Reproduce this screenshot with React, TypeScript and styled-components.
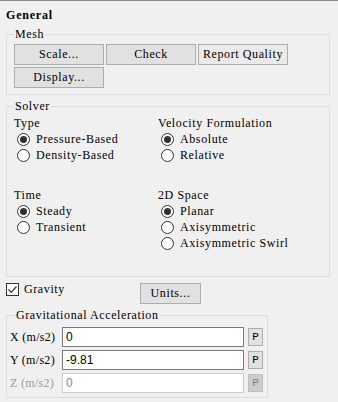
import styled, { createGlobalStyle } from 'styled-components';

const GlobalStyle = createGlobalStyle`
  html, body {
    margin: 0;
    padding: 0;
    background: #f0f0f0;
  }
  body {
    font-family: "Liberation Serif", "Noto Sans CJK SC", serif;
    font-size: 12px;
    letter-spacing: 0.6px;
    color: #000;
  }
`;

const typeOptions = [
  { label: 'Pressure-Based', checked: true },
  { label: 'Density-Based', checked: false },
];
const velocityOptions = [
  { label: 'Absolute', checked: true },
  { label: 'Relative', checked: false },
];
const timeOptions = [
  { label: 'Steady', checked: true },
  { label: 'Transient', checked: false },
];
const spaceOptions = [
  { label: 'Planar', checked: true },
  { label: 'Axisymmetric', checked: false },
  { label: 'Axisymmetric Swirl', checked: false },
];
const accelRows = [
  { label: 'X (m/s2)', value: '0', disabled: false },
  { label: 'Y (m/s2)', value: '-9.81', disabled: false },
  { label: 'Z (m/s2)', value: '0', disabled: true },
];

type Option = { label: string; checked: boolean };

function RadioGroup({ title, options }: { title: string; options: Option[] }) {
  return (
    <Section>
      <SectionLabel>{title}</SectionLabel>
      {options.map((o) => (
        <RadioRow key={o.label}>
          <RadioCircle $checked={o.checked} />
          <span>{o.label}</span>
        </RadioRow>
      ))}
    </Section>
  );
}

function App() {
  return (
    <>
      <GlobalStyle />
      <Panel>
        <Title>General</Title>

        <Group>
          <Legend>Mesh</Legend>
          <ButtonGrid>
            <Button>Scale...</Button>
            <Button>Check</Button>
            <Button $light>Report Quality</Button>
            <Button>Display...</Button>
          </ButtonGrid>
        </Group>

        <SolverGroup>
          <Legend>Solver</Legend>
          <SolverGrid>
            <RadioGroup title="Type" options={typeOptions} />
            <RadioGroup title="Velocity Formulation" options={velocityOptions} />
            <RadioGroup title="Time" options={timeOptions} />
            <RadioGroup title="2D Space" options={spaceOptions} />
          </SolverGrid>
        </SolverGroup>

        <GravityRow>
          <CheckLabel>
            <CheckBox>
              <svg width="11" height="11" viewBox="0 0 11 11">
                <polyline points="1.5,5.5 4.2,8.3 9.5,2.5" fill="none" stroke="#333" strokeWidth="1.2" />
              </svg>
            </CheckBox>
            <span>Gravity</span>
          </CheckLabel>
          <UnitsButton>Units...</UnitsButton>
        </GravityRow>

        <AccelGroup>
          <AccelLegend>Gravitational Acceleration</AccelLegend>
          <AccelList>
            {accelRows.map((r) => (
              <AccelRow key={r.label}>
                <AccelLabel $disabled={r.disabled}>{r.label}</AccelLabel>
                <ValueBox $disabled={r.disabled}>{r.value}</ValueBox>
                <PButton $disabled={r.disabled}>P</PButton>
              </AccelRow>
            ))}
          </AccelList>
        </AccelGroup>
      </Panel>
    </>
  );
}

export default App;

const Panel = styled.div`
  width: 338px;
  height: 402px;
  box-sizing: border-box;
  border-top: 1px solid #8c8c8c;
  padding: 0 8px 0 6px;
  overflow: hidden;
`;

const Title = styled.div`
  margin-top: 7px;
  height: 14px;
  line-height: 14px;
  font-weight: bold;
  letter-spacing: 0.8px;
`;

const Group = styled.fieldset`
  margin: 6px 0 0 0;
  padding: 4px 7px 6px 7px;
  border: 1px solid #dcdcdc;
  min-width: 0;
`;

const Legend = styled.legend`
  padding: 0 1px;
  height: 12px;
  line-height: 12px;
`;

const ButtonGrid = styled.div`
  display: grid;
  grid-template-columns: repeat(3, 90px);
  grid-auto-rows: 21px;
  gap: 2px;
`;

const Button = styled.div<{ $light?: boolean }>`
  box-sizing: border-box;
  height: 21px;
  border: 1px solid #adadad;
  background: ${(p) => (p.$light ? '#eaeaea' : '#e1e1e1')};
  display: flex;
  align-items: center;
  justify-content: center;
  white-space: nowrap;
`;

const SolverGroup = styled(Group)`
  margin-top: 5px;
  padding: 3px 7px 25px 7px;
`;

const SolverGrid = styled.div`
  display: grid;
  grid-template-columns: 144px 1fr;
  row-gap: 24px;
  align-items: start;
`;

const Section = styled.div`
  display: flex;
  flex-direction: column;
`;

const SectionLabel = styled.div`
  height: 16px;
  line-height: 16px;
`;

const RadioRow = styled.div`
  display: flex;
  align-items: center;
  gap: 6px;
  height: 16px;
  padding-left: 3px;
  white-space: nowrap;
`;

const RadioCircle = styled.span<{ $checked: boolean }>`
  box-sizing: border-box;
  width: 13px;
  height: 13px;
  border-radius: 50%;
  border: 1px solid #333;
  background: #fff;
  display: flex;
  align-items: center;
  justify-content: center;
  &::after {
    content: '';
    width: 7px;
    height: 7px;
    border-radius: 50%;
    background: ${(p) => (p.$checked ? '#333' : 'transparent')};
  }
`;

const GravityRow = styled.div`
  display: flex;
  align-items: flex-start;
  margin-top: 6px;
`;

const CheckLabel = styled.div`
  width: 134px;
  height: 13px;
  display: flex;
  align-items: center;
  gap: 5px;
`;

const CheckBox = styled.span`
  box-sizing: border-box;
  width: 13px;
  height: 13px;
  border: 1px solid #333;
  background: #fff;
  display: flex;
  align-items: center;
  justify-content: center;
`;

const UnitsButton = styled(Button)`
  width: 61px;
`;

const AccelGroup = styled(Group)`
  margin-top: 5px;
  width: 262px;
  box-sizing: border-box;
  padding: 6px 4px 4px 3px;
`;

const AccelLegend = styled(Legend)`
  margin-left: 5px;
`;

const AccelList = styled.div`
  display: flex;
  flex-direction: column;
  gap: 3px;
`;

const AccelRow = styled.div`
  display: flex;
  align-items: center;
  height: 20px;
`;

const AccelLabel = styled.div<{ $disabled: boolean }>`
  width: 52px;
  white-space: nowrap;
  letter-spacing: 0.3px;
  color: ${(p) => (p.$disabled ? '#9a9a9a' : '#000')};
`;

const ValueBox = styled.div<{ $disabled: boolean }>`
  box-sizing: border-box;
  width: 182px;
  height: 20px;
  border: 1px solid ${(p) => (p.$disabled ? '#cccccc' : '#7a7a7a')};
  background: #fff;
  padding-left: 3px;
  font-family: "Liberation Sans", "Noto Sans", sans-serif;
  font-size: 12px;
  letter-spacing: 0;
  line-height: 18px;
  color: ${(p) => (p.$disabled ? '#8a8a8a' : '#000')};
`;

const PButton = styled.div<{ $disabled: boolean }>`
  box-sizing: border-box;
  margin-left: 4px;
  width: 15px;
  height: 18px;
  border: 1px solid ${(p) => (p.$disabled ? '#bfbfbf' : '#adadad')};
  background: ${(p) => (p.$disabled ? '#cccccc' : '#e1e1e1')};
  color: ${(p) => (p.$disabled ? '#838383' : '#000')};
  display: flex;
  align-items: center;
  justify-content: center;
  letter-spacing: 0;
  font-family: "Liberation Mono", monospace;
  font-size: 11px;
`;
